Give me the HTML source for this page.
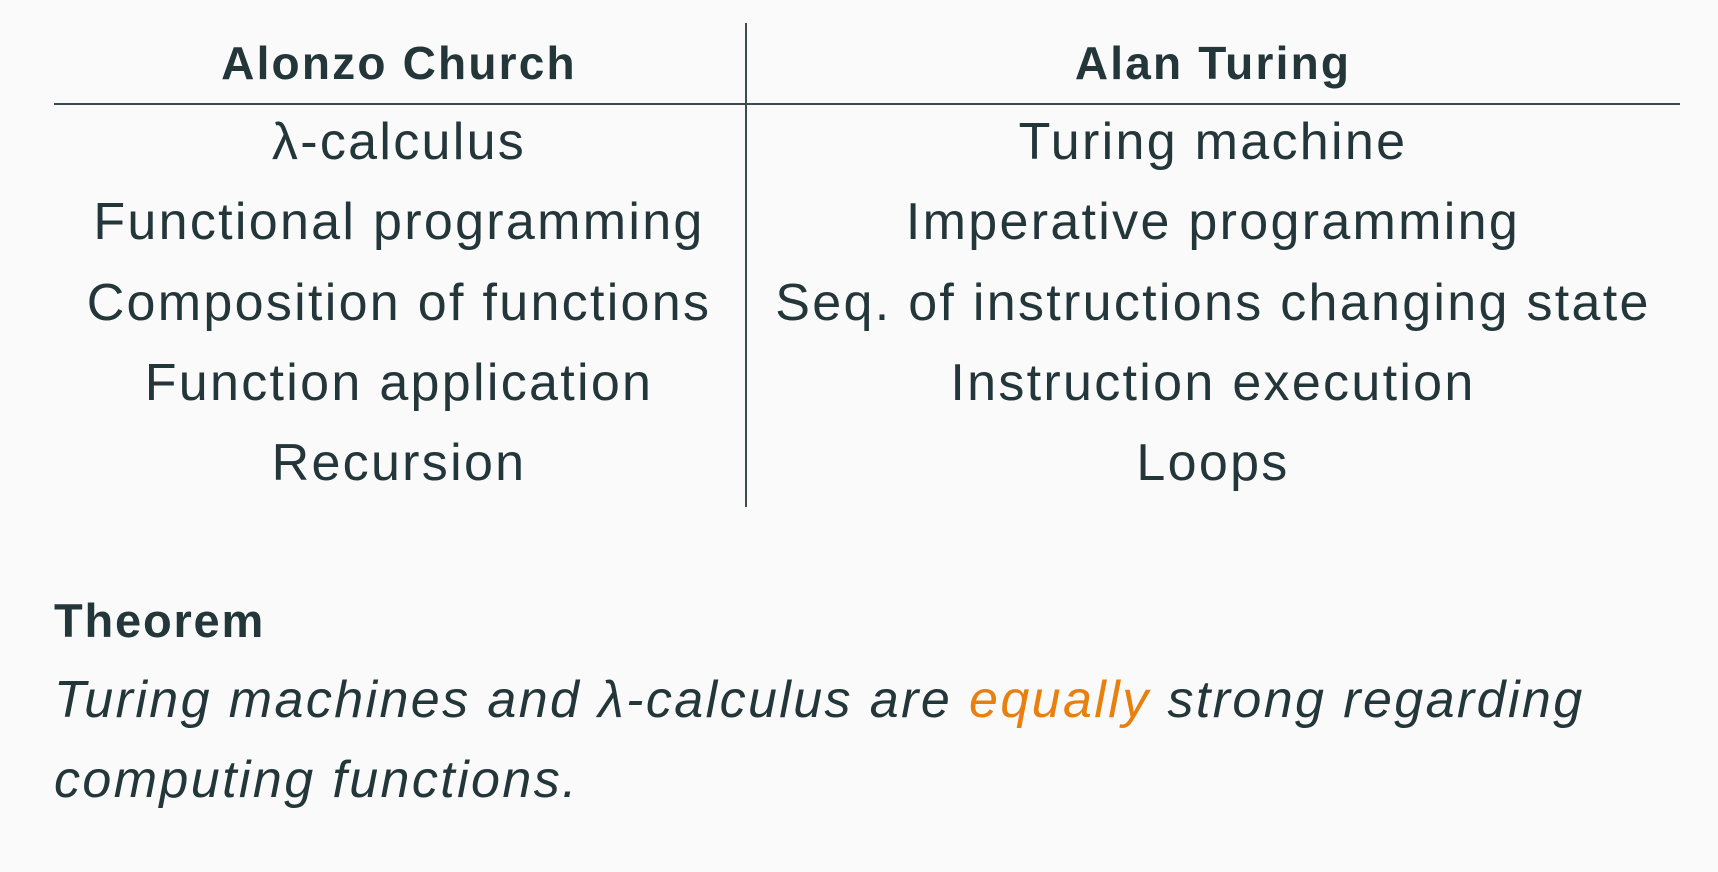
<!DOCTYPE html>
<html><head><meta charset="utf-8"><style>
html,body{margin:0;padding:0;background:#fafafa;}
body{width:1718px;height:872px;position:relative;overflow:hidden;font-family:"Liberation Sans",sans-serif;color:#23363a;}
.t{position:absolute;font-size:52px;letter-spacing:2.3px;line-height:1;white-space:nowrap;transform:translateX(-50%);}
.l{left:399px}.r{left:1213px}
.h{font-weight:bold;font-size:46px;letter-spacing:2.2px}
.vl{position:absolute;left:745px;top:23px;width:2px;height:484px;background:#3d4b4e;}
.hl{position:absolute;left:54px;top:103px;width:1626px;height:2px;background:#3d4b4e;}
.th{position:absolute;left:54px;font-size:47px;letter-spacing:1.8px;line-height:1;font-weight:bold;}
.it{position:absolute;left:54px;font-size:52px;letter-spacing:2.4px;line-height:1;font-style:italic;white-space:nowrap;}
.o{color:#e8800f}
</style></head><body>
<div class="vl"></div><div class="hl"></div>
<div class="t l h" style="top:40px">Alonzo Church</div>
<div class="t r h" style="top:40px">Alan Turing</div>
<div class="t l" style="top:116px">λ-calculus</div>
<div class="t r" style="top:116px">Turing machine</div>
<div class="t l" style="top:196px">Functional programming</div>
<div class="t r" style="top:196px">Imperative programming</div>
<div class="t l" style="top:277px">Composition of functions</div>
<div class="t r" style="top:277px">Seq. of instructions changing state</div>
<div class="t l" style="top:357px">Function application</div>
<div class="t r" style="top:357px">Instruction execution</div>
<div class="t l" style="top:437px">Recursion</div>
<div class="t r" style="top:437px">Loops</div>
<div class="th" style="top:597px">Theorem</div>
<div class="it" style="top:674px">Turing machines and λ-calculus are <span class="o">equally</span> strong regarding</div>
<div class="it" style="top:754px">computing functions.</div>
</body></html>
